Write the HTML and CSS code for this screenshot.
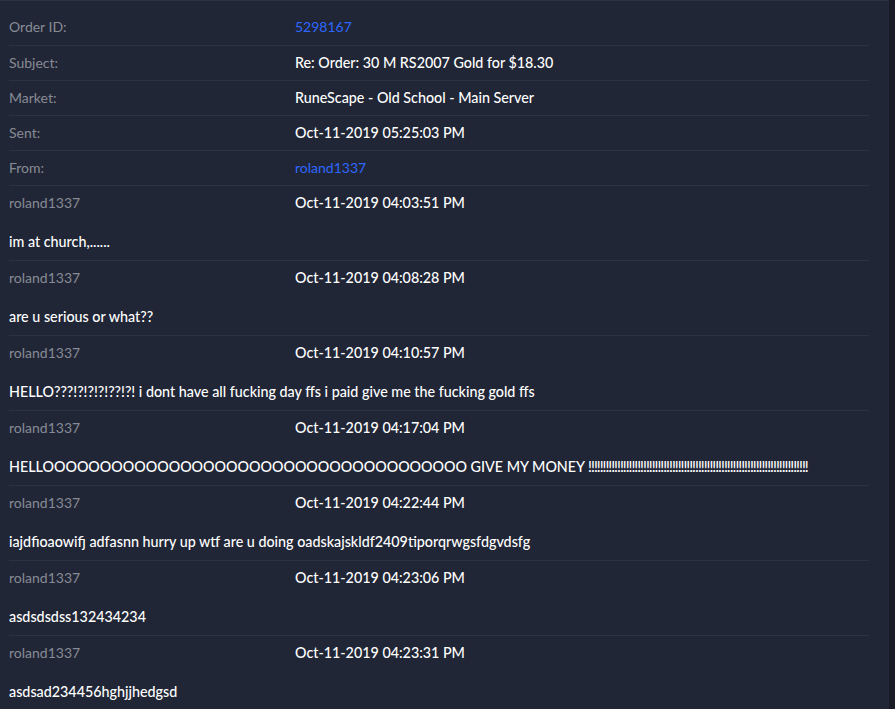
FILE: index.html
```html
<!DOCTYPE html>
<html>
<head>
<meta charset="utf-8">
<link rel="stylesheet" href="styles.css">
</head>
<body>
<div class="page">
  <main class="content">
    <div class="table">
      <div class="row first"><span class="label">Order ID:</span><a class="link">5298167</a></div>
      <div class="row"><span class="label">Subject:</span><span class="value">Re: Order: 30 M RS2007 Gold for $18.30</span></div>
      <div class="row"><span class="label">Market:</span><span class="value">RuneScape - Old School - Main Server</span></div>
      <div class="row"><span class="label">Sent:</span><span class="value">Oct-11-2019 05:25:03 PM</span></div>
      <div class="row"><span class="label">From:</span><a class="link">roland1337</a></div>

      <div class="msg">
        <div class="msg-head"><span class="label">roland1337</span><span class="value">Oct-11-2019 04:03:51 PM</span></div>
        <p class="msg-body">im at church,......</p>
      </div>
      <div class="msg">
        <div class="msg-head"><span class="label">roland1337</span><span class="value">Oct-11-2019 04:08:28 PM</span></div>
        <p class="msg-body">are u serious or what??</p>
      </div>
      <div class="msg">
        <div class="msg-head"><span class="label">roland1337</span><span class="value">Oct-11-2019 04:10:57 PM</span></div>
        <p class="msg-body">HELLO???!?!?!?!??!?! i dont have all fucking day ffs i paid give me the fucking gold ffs</p>
      </div>
      <div class="msg">
        <div class="msg-head"><span class="label">roland1337</span><span class="value">Oct-11-2019 04:17:04 PM</span></div>
        <p class="msg-body">HELLOOOOOOOOOOOOOOOOOOOOOOOOOOOOOOOOOOOOO GIVE MY MONEY <span class="bangs">!!!!!!!!!!!!!!!!!!!!!!!!!!!!!!!!!!!!!!!!!!!!!!!!!!!!!!!!!!!!!!!!!!!!!!!!!!!!</span></p>
      </div>
      <div class="msg">
        <div class="msg-head"><span class="label">roland1337</span><span class="value">Oct-11-2019 04:22:44 PM</span></div>
        <p class="msg-body">iajdfioaowifj adfasnn hurry up wtf are u doing oadskajskldf2409tiporqrwgsfdgvdsfg</p>
      </div>
      <div class="msg">
        <div class="msg-head"><span class="label">roland1337</span><span class="value">Oct-11-2019 04:23:06 PM</span></div>
        <p class="msg-body">asdsdsdss132434234</p>
      </div>
      <div class="msg">
        <div class="msg-head"><span class="label">roland1337</span><span class="value">Oct-11-2019 04:23:31 PM</span></div>
        <p class="msg-body">asdsad234456hghjjhedgsd</p>
      </div>
    </div>
  </main>
  <div class="scrollbar"></div>
</div>
</body>
</html>
```

FILE: styles.css
```css
* { box-sizing: border-box; }
html, body {
  margin: 0;
  padding: 0;
  height: 100%;
  overflow: hidden;
  background: #212636;
}
body {
  font-family: Lato, "Open Sans", sans-serif;
  font-size: 14px;
  color: #ffffff;
}
.page {
  display: flex;
  height: 709px;
}
.content {
  flex: 1;
  min-width: 0;
  padding: 0 20px 0 9px;
  border-top: 1px solid #2c3243;
  overflow: hidden;
}
.scrollbar {
  width: 6px;
  background: #191c27;
}
.table {
  display: flex;
  flex-direction: column;
}
.row, .msg-head {
  display: grid;
  grid-template-columns: 286px 1fr;
  line-height: 20px;
  padding: 7px 0;
}
.row {
  border-bottom: 1px solid #2c3243;
}
.row.first {
  padding-top: 16px;
  padding-bottom: 8px;
}
.label {
  color: #878b95;
}
.value {
  color: #ffffff;
  font-weight: 500;
  font-size: 14.3px;
}
.link {
  color: #2d66ff;
}
.msg {
  border-bottom: 1px solid #2c3243;
}
.msg-body {
  margin: 0;
  line-height: 20px;
  padding: 12px 0 8px;
  font-weight: 500;
  font-size: 14.3px;
  white-space: nowrap;
}
.bangs {
  letter-spacing: -1px;
}
```
